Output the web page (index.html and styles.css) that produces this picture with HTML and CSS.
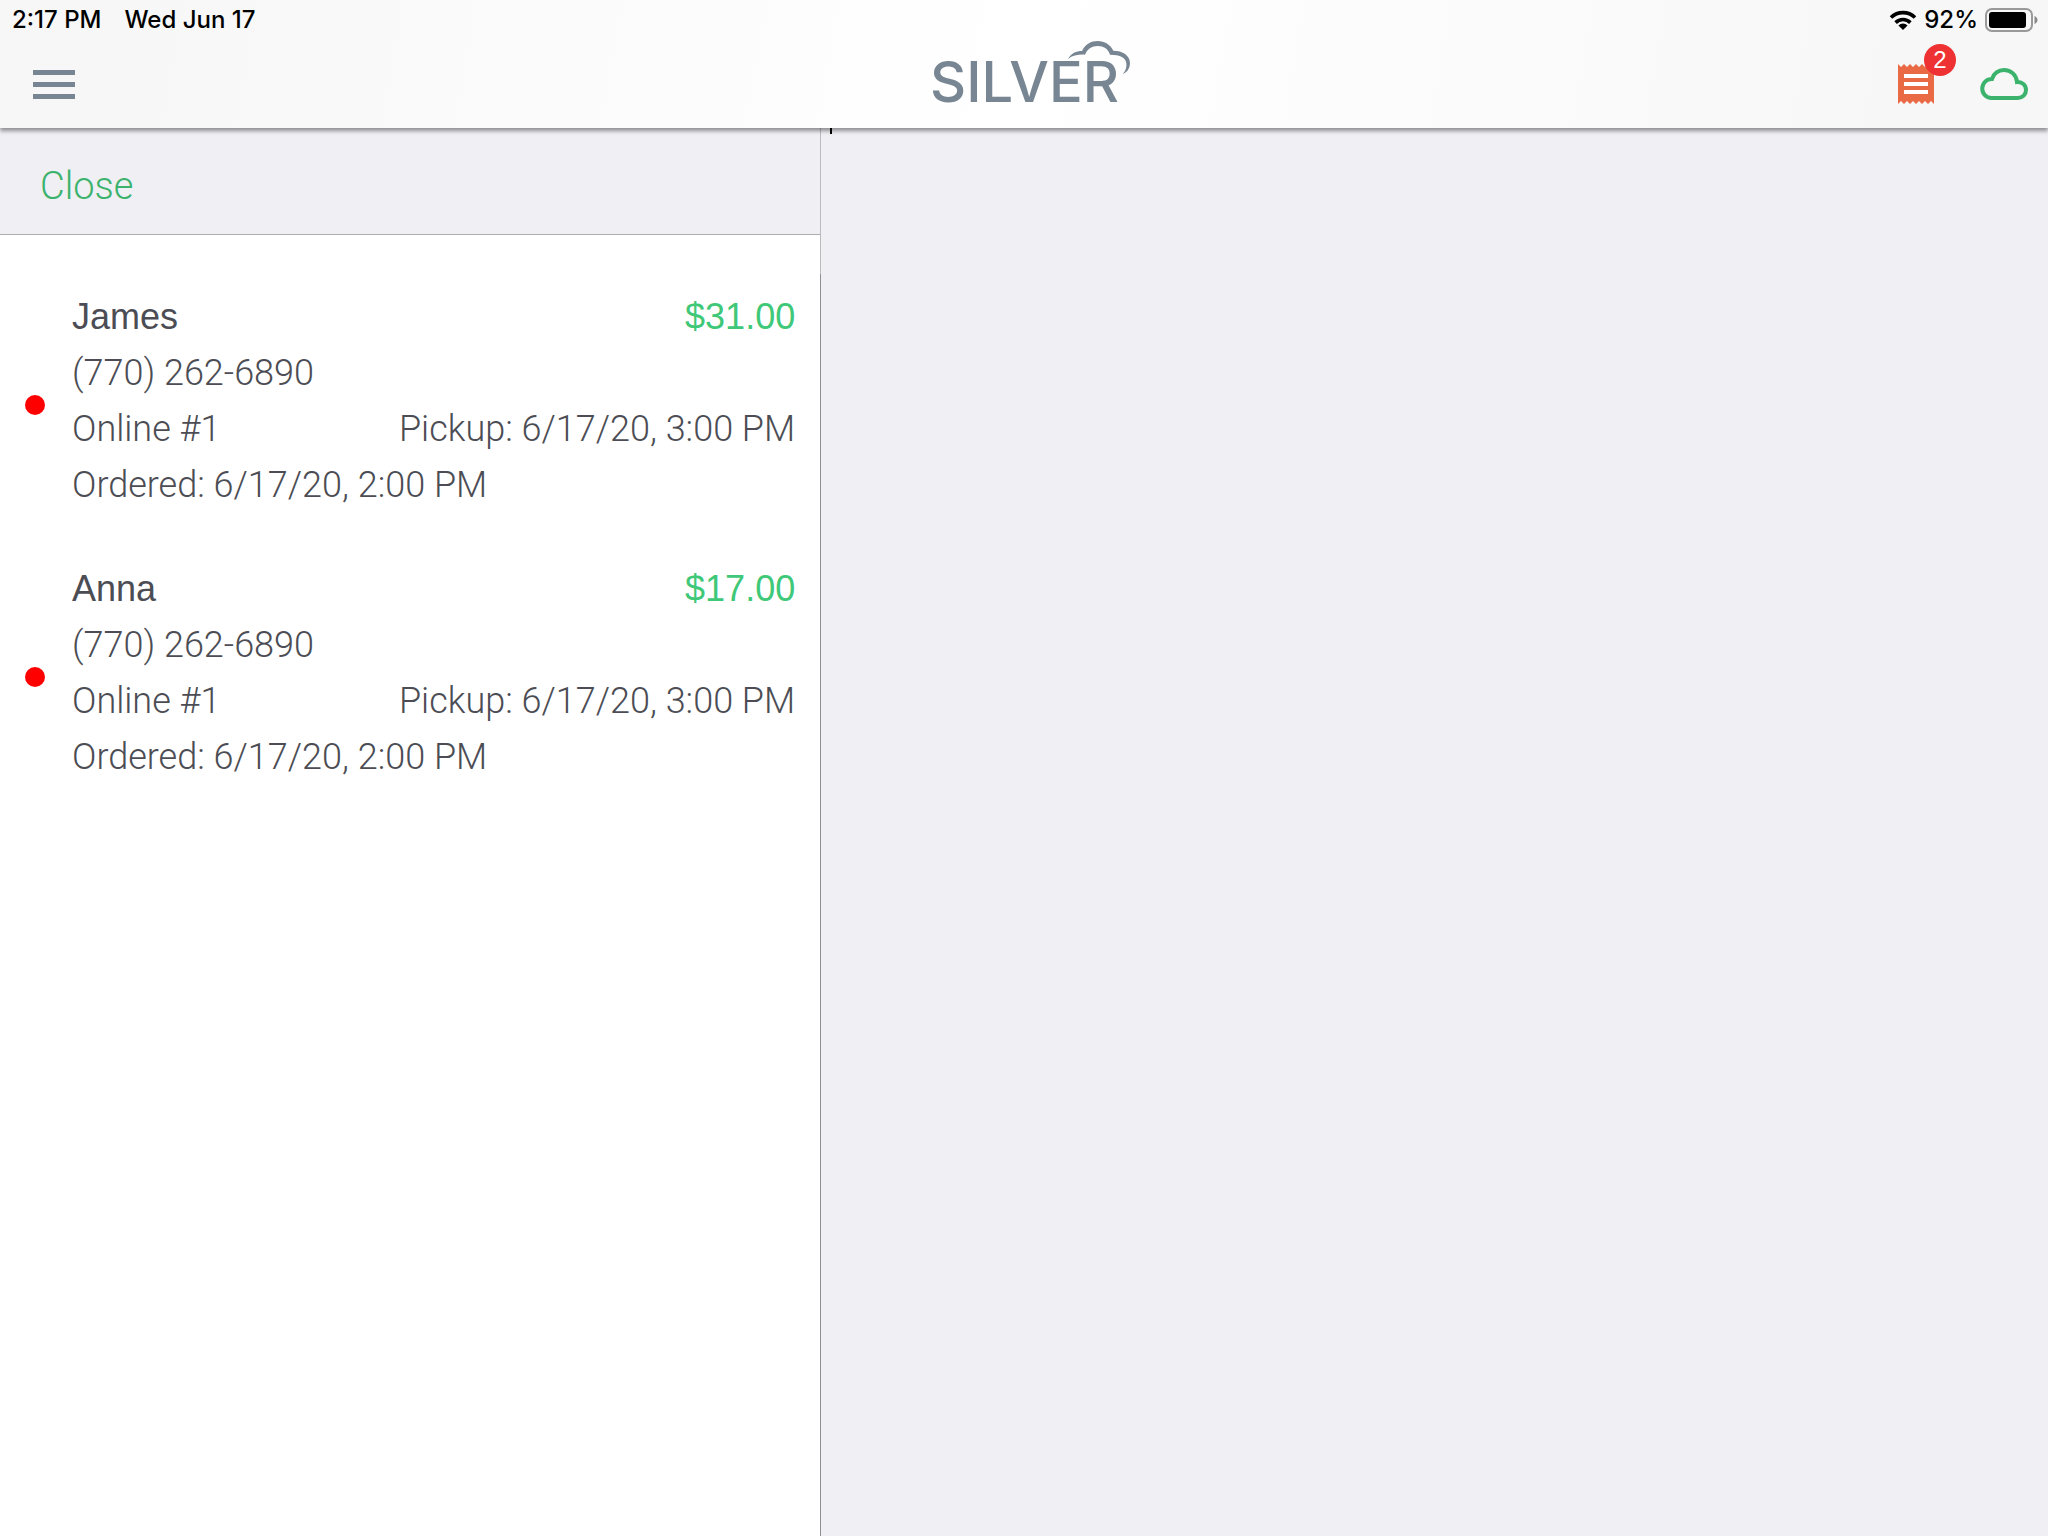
FILE: index.html
```html
<!DOCTYPE html>
<html lang="en">
<head>
    <meta charset="UTF-8">
    <meta name="viewport" content="width=device-width, initial-scale=1.0">
    <title>Silver - Online Orders</title>
    <link rel="stylesheet" href="styles.css">
</head>
<body>
    <header class="header">
        <div class="status">
            <span>2:17 PM</span>
            <span>Wed Jun 17</span>
            <div class="status-right">
                <svg class="wifi" viewBox="0 0 28 20" aria-hidden="true">
                    <path d="M2 7.6a17 17 0 0 1 24 0M6.600 12.600a10.500 10.500 0 0 1 14.800 0" fill="none" stroke="#000" stroke-width="3.6"/>
                    <path d="M14 20l-4.600-4.600a6.500 6.500 0 0 1 9.200 0z"/>
                </svg>
                <span>92%</span>
                <svg class="battery" viewBox="0 0 53 24" aria-hidden="true">
                    <rect x="1" y="1" width="46" height="22" rx="6" fill="none" stroke="#999" stroke-width="2"/>
                    <rect x="4" y="4" width="37" height="16" rx="3"/>
                    <path d="M49.500 8c4 1.500 4 6.500 0 8z" fill="#888"/>
                </svg>
            </div>
        </div>
        <div class="nav">
            <button class="menu" aria-label="Menu">
                <span></span>
                <span></span>
                <span></span>
            </button>
            <div class="logo">
                SILVER
                <svg class="logo-cloud" viewBox="498 30 189 105" aria-hidden="true">
                    <path d="M498 87C508 70 522 63 540 63C550 42 567 33 587 33C608 33 625 44 634 62C662 62 684 76 684 100C683 116 676 127 662 132C672 122 674 112 673 100C672 84 655 74 624 74C618 56 605 48 587 48C570 48 557 56 549 74C530 73 512 76 498 87Z"/>
                </svg>
            </div>
            <div class="actions">
                <button class="orders-btn" aria-label="Online orders, 2 new">
                    <svg class="receipt" viewBox="0 0 36 40" aria-hidden="true">
                        <path d="M0 0l3 3 3-3 3 3 3-3 3 3 3-3 3 3 3-3 3 3 3-3 3 3 3-3v40l-3-3-3 3-3-3-3 3-3-3-3 3-3-3-3 3-3-3-3 3-3-3-3 3z" fill="#ea6a45"/>
                        <path d="M6 12h24M6 20h24M6 28h24" stroke="#fff" stroke-width="4"/>
                    </svg>
                    <span class="badge">2</span>
                </button>
                <button class="cloud-btn" aria-label="Cloud status">
                    <svg class="cloud" viewBox="0 0 48 32" aria-hidden="true">
                        <path d="M11.500 30A9.500 9.500 0 0 1 12 11C13.500 5.500 18.500 2 24 2C31 2 36.500 7 37 14C42.500 13.500 46 17.500 46 22C46 26.500 42.500 30 38 30Z" fill="none" stroke="#3bb36c" stroke-width="4"/>
                    </svg>
                </button>
            </div>
        </div>
    </header>

    <main class="content">
        <section class="sidebar">
            <div class="toolbar">
                <button class="close">Close</button>
            </div>
            <ul class="orders">
                <li class="order">
                    <span class="dot"></span>
                    <div class="info">
                        <div class="row main"><span>James</span><span class="price">$31.00</span></div>
                        <div class="row">(770) 262-6890</div>
                        <div class="row"><span>Online #1</span><span>Pickup: 6/17/20, 3:00 PM</span></div>
                        <div class="row">Ordered: 6/17/20, 2:00 PM</div>
                    </div>
                </li>
                <li class="order">
                    <span class="dot"></span>
                    <div class="info">
                        <div class="row main"><span>Anna</span><span class="price">$17.00</span></div>
                        <div class="row">(770) 262-6890</div>
                        <div class="row"><span>Online #1</span><span>Pickup: 6/17/20, 3:00 PM</span></div>
                        <div class="row">Ordered: 6/17/20, 2:00 PM</div>
                    </div>
                </li>
            </ul>
        </section>
        <section class="detail"></section>
    </main>
</body>
</html>
```

FILE: styles.css
```css
* {
    box-sizing: border-box;
}
body {
    margin: 0;
    min-height: 100vh;
    display: flex;
    flex-direction: column;
    background-color: #efeff4;
    color: #4c4d54;
    font-family: "Liberation Sans", Arial, sans-serif;
    font-size: 36px;
}
button {
    padding: 0;
    border: none;
    background: none;
    font: inherit;
    cursor: pointer;
}
svg {
    display: block;
}

/* Header */
.header {
    position: relative;
    z-index: 1;
    background: linear-gradient(100deg, #f7f7f7 5%, #fff 50%, #f7f7f7 95%);
    box-shadow: 0 3px 4px rgba(0, 0, 0, 0.4);
}
.header::after {
    content: "";
    position: absolute;
    top: 100%;
    left: calc(40% + 11px);
    width: 2px;
    height: 6px;
    background-color: #000;
}
.status {
    display: flex;
    align-items: center;
    gap: 23px;
    height: 40px;
    padding: 0 10px 1px 12px;
    color: #000;
    font-family: Inter, sans-serif;
    font-size: 24px;
    font-weight: 500;
}
.status-right {
    display: flex;
    align-items: center;
    gap: 7px;
    margin-left: auto;
}
.wifi {
    width: 28px;
    height: 20px;
}
.battery {
    width: 53px;
    height: 24px;
}
.nav {
    display: grid;
    grid-template-columns: 1fr auto 1fr;
    align-items: center;
    height: 88px;
    padding: 0 20px 0 33px;
}
.menu {
    display: flex;
    flex-direction: column;
    gap: 7px;
    width: 42px;
}
.menu span {
    height: 5px;
    background-color: #778692;
}
.logo {
    position: relative;
    padding: 0 12px 4px 0;
    color: #778692;
    font-family: Inter, sans-serif;
    font-size: 56px;
    font-weight: 500;
    line-height: 60px;
}
.logo-cloud {
    position: absolute;
    top: -12px;
    right: 0;
    width: 63px;
    height: 35px;
    fill: #778692;
}
.actions {
    display: flex;
    align-items: center;
    justify-content: flex-end;
    gap: 46px;
}
.orders-btn {
    position: relative;
}
.receipt {
    width: 36px;
    height: 40px;
}
.badge {
    position: absolute;
    top: -20px;
    right: -22px;
    width: 32px;
    height: 32px;
    border-radius: 50%;
    background-color: #ee3233;
    color: #fff;
    font-size: 24px;
    line-height: 32px;
}
.cloud {
    width: 48px;
    height: 32px;
}

/* Order list */
.content {
    flex: 1;
    display: flex;
}
.sidebar {
    display: flex;
    flex-direction: column;
    width: calc(40% + 2px);
    border-right: 1px solid #bbbbbe;
    background-color: #fff;
}
.toolbar {
    display: flex;
    align-items: center;
    height: 107px;
    padding: 10px 40px 0;
    border-bottom: 1px solid #adadb0;
    background-color: #efeff4;
}
.close {
    color: #3bb36c;
    font-family: Roboto, sans-serif;
    font-size: 38px;
    font-weight: 300;
}
.orders {
    flex: 1;
    margin: 39px -1px 0 0;
    padding: 0;
    border-right: 1px solid #8e8e93;
    list-style: none;
}
.order {
    display: flex;
    align-items: center;
    gap: 27px;
    padding: 15px 25px 33px;
}
.dot {
    width: 20px;
    height: 20px;
    margin-top: 8px;
    border-radius: 50%;
    background-color: #f00;
}
.info {
    flex: 1;
}
.row {
    display: flex;
    justify-content: space-between;
    font-family: Roboto, sans-serif;
    font-weight: 300;
    line-height: 56px;
}
.row.main {
    font-family: "Liberation Sans", Arial, sans-serif;
    font-weight: 400;
}
.price {
    color: #3fc878;
}
.detail {
    flex: 1;
}
```
